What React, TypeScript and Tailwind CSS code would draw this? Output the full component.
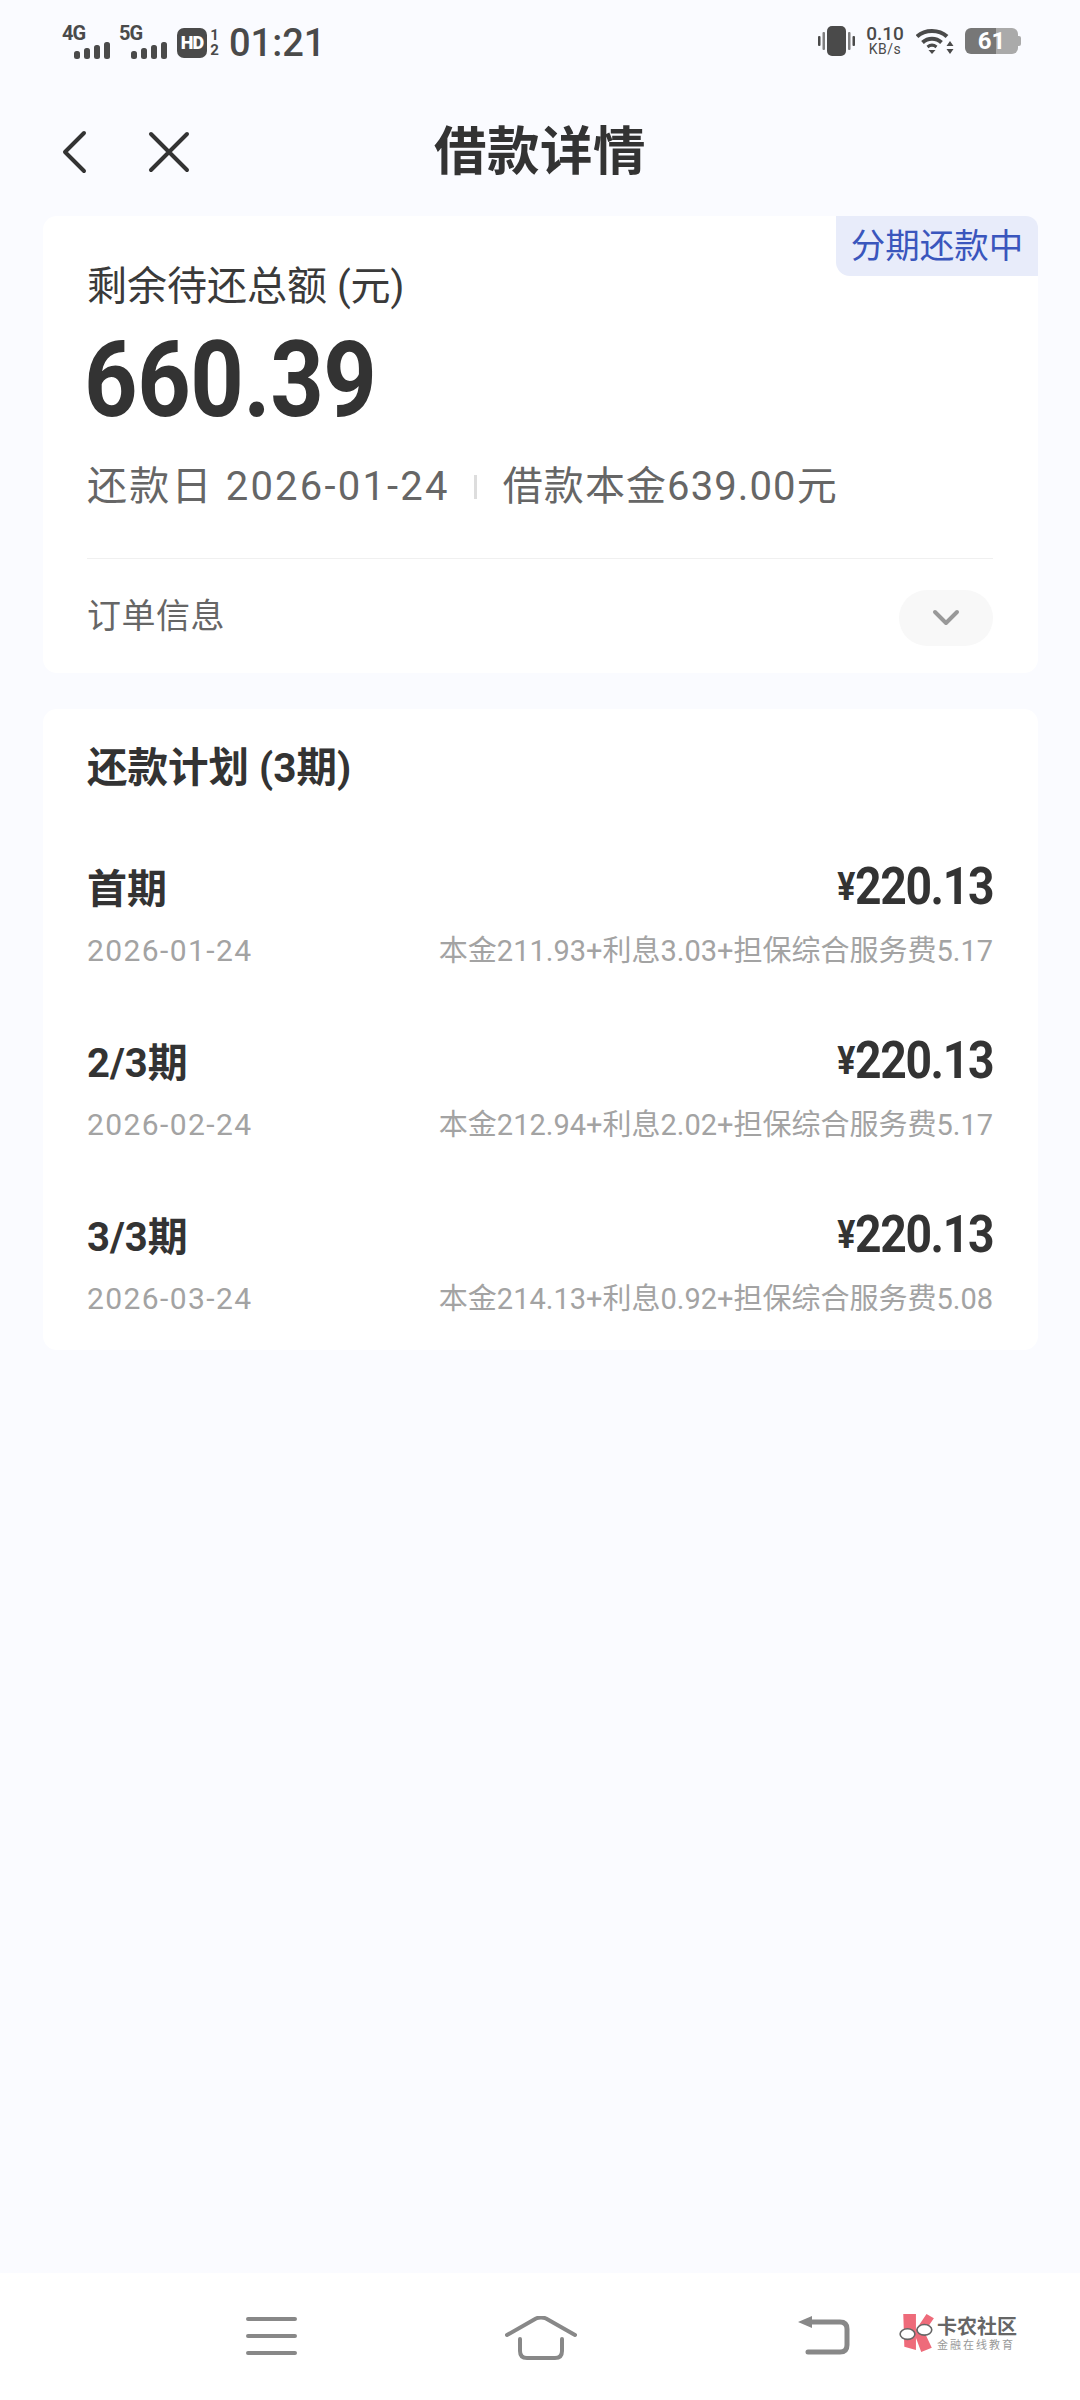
const font = "font-['Roboto','Noto_Sans_CJK_SC',sans-serif]";

const plans = [
  { name: "首期", date: "2026-01-24", detail: "本金211.93+利息3.03+担保综合服务费5.17" },
  { name: "2/3期", date: "2026-02-24", detail: "本金212.94+利息2.02+担保综合服务费5.17" },
  { name: "3/3期", date: "2026-03-24", detail: "本金214.13+利息0.92+担保综合服务费5.08" },
];

function Bars() {
  return (
    <svg width="36" height="17" viewBox="0 0 36 17" fill="#4a4a4a">
      <rect x="0" y="9" width="6" height="8" rx="2.5" />
      <rect x="10" y="6" width="6" height="11" rx="2.5" />
      <rect x="20" y="3" width="6" height="14" rx="2.5" />
      <rect x="30" y="0" width="6" height="17" rx="2.5" />
    </svg>
  );
}

function Net({ label }: { label: string }) {
  return (
    <div className="flex w-[48px] flex-col">
      <span className="h-[15px] text-[20px] leading-[15px] font-bold tracking-[-1px] text-[#4a4a4a]">{label}</span>
      <div className="mt-[1px] flex justify-end"><Bars /></div>
    </div>
  );
}

function StatusBar() {
  return (
    <div className="flex h-[86px] items-start justify-between pt-[26px] pr-[59px] pl-[62px]">
      <div className="flex items-center">
        <Net label="4G" />
        <div className="ml-[9px]"><Net label="5G" /></div>
        <div className="ml-[10px] flex h-[30px] w-[30px] items-center justify-center rounded-[7px] bg-[#4a4a4a] text-[18px] leading-none font-black tracking-[-1px] text-white">HD</div>
        <div className="ml-[2px] flex w-[11px] flex-col items-center text-[15px] leading-[15px] font-bold text-[#4a4a4a]">
          <span>1</span>
          <span>2</span>
        </div>
        <span className="ml-[9px] text-[38px] leading-[32px] font-medium text-[#4a4a4a]">01:21</span>
      </div>
      <div className="flex items-center">
        <svg width="37" height="30" viewBox="0 0 37 30" fill="#4a4a4a">
          <rect x="9" y="0" width="19" height="30" rx="5" />
          <rect x="0" y="10" width="2.5" height="10" rx="1" />
          <rect x="4.5" y="6" width="2.5" height="18" rx="1" opacity=".7" />
          <rect x="30" y="6" width="2.5" height="18" rx="1" opacity=".7" />
          <rect x="34.5" y="10" width="2.5" height="10" rx="1" />
        </svg>
        <div className="ml-[11px] flex w-[38px] flex-col items-center text-[#4a4a4a]">
          <span className="text-[19px] leading-[16px] font-medium">0.10</span>
          <span className="text-[14px] leading-[14px] tracking-[.5px]">KB/s</span>
        </div>
        <svg className="ml-[12px]" width="38" height="28" viewBox="0 0 38 28" fill="none" stroke="#4a4a4a" strokeWidth="4">
          <path d="M1 9.5C9 2 23 2 31 9.5" />
          <path d="M6.5 15.5C12 10.5 20 10.5 25.5 15.5" />
          <path d="M11.5 20C14.5 17.5 17.500 17.500 20.500 20" strokeWidth="3" />
          <path d="M12.500 23H19.500L16 27Z" fill="#4a4a4a" stroke="none" />
          <path d="M34 14L37.500 19H30.500ZM34 27L37.500 22H30.500Z" fill="#4a4a4a" stroke="none" />
        </svg>
        <div className="ml-[11px] flex items-center">
          <div className="flex h-[26px] w-[53px] items-center justify-center rounded-[6px] bg-[linear-gradient(90deg,#777_0,#777_58%,#aaa_58%,#aaa_100%)] text-[24px] font-bold text-white">61</div>
          <div className="h-[10px] w-[3px] rounded-r-[2px] bg-[#aaa]" />
        </div>
      </div>
    </div>
  );
}

function Header() {
  return (
    <div className="relative flex h-[130px] items-center justify-center pt-[2px]">
      <div className="absolute top-[44px] left-[60px] flex items-center">
        <svg width="30" height="44" viewBox="0 0 30 44" fill="none" stroke="#333" strokeWidth="4" strokeLinecap="round" strokeLinejoin="round">
          <path d="M24 3L5 22L24 41" />
        </svg>
        <svg className="ml-[58px]" width="42" height="42" viewBox="0 0 42 42" fill="none" stroke="#333" strokeWidth="4" strokeLinecap="round">
          <path d="M3 3L39 39M39 3L3 39" />
        </svg>
      </div>
      <h1 className="text-[52.500px] leading-none font-bold tracking-[.5px] text-[#333]">借款详情</h1>
    </div>
  );
}

function SummaryCard() {
  return (
    <section className="relative mr-[42px] ml-[43px] h-[457px] rounded-[14px] bg-white pt-[46px] pr-[45px] pl-[44px]">
      <div className="absolute top-0 right-0 flex h-[60px] w-[202px] items-center justify-center rounded-tr-[12px] rounded-bl-[14px] bg-[#e8ecfa] text-[34.500px] leading-none text-[#3a56bd]">分期还款中</div>
      <div className="mt-[1px] text-[40px] leading-[48px] text-[#3a3a3a]">剩余待还总额 (元)</div>
      <div className="mt-[15px] -ml-[3px] h-[110px] origin-left scale-x-[.89] text-[105px] leading-[110px] font-bold tracking-[-.5px] text-[#333]">660.39</div>
      <div className="mt-[25px] flex h-[52px] items-center text-[40px] leading-none text-[#666]">
        <span className="tracking-[2.200px]">还款日 2026-01-24</span>
        <span className="mr-[26px] ml-[24px] h-[24px] w-[3px] bg-[#ddd]" />
        <span className="tracking-[1.100px]">借款本金639.00元</span>
      </div>
      <div className="mt-[45px] flex h-[115px] items-center justify-between border-t border-[#f0f0f0]">
        <span className="text-[34px] leading-none tracking-[.5px] text-[#666]">订单信息</span>
        <span className="mt-[4px] flex h-[56px] w-[94px] items-center justify-center rounded-full bg-[#f8f8f8]">
          <svg width="28" height="18" viewBox="0 0 28 18" fill="none" stroke="#999" strokeWidth="4" strokeLinecap="round" strokeLinejoin="round">
            <path d="M3 3L14 14L25 3" />
          </svg>
        </span>
      </div>
    </section>
  );
}

function PlanCard() {
  return (
    <section className="mt-[36px] mr-[42px] ml-[43px] h-[641px] rounded-[14px] bg-white pt-[33px] pr-[45px] pl-[44px]">
      <h2 className="text-[40.500px] leading-[52px] font-bold text-[#333]">还款计划 (3期)</h2>
      <div className="mt-[66px] flex flex-col gap-[56px]">
        {plans.map((p) => (
          <div key={p.name} className="flex h-[118px] justify-between">
            <div className="flex flex-col">
              <span className="text-[40px] leading-[60px] font-bold text-[#333]">{p.name}</span>
              <span className="mt-[14px] text-[30px] leading-[34px] tracking-[1.400px] text-[#a3a3a3]">{p.date}</span>
            </div>
            <div className="flex flex-col items-end">
              <span className="-mt-[3px] flex h-[60px] origin-right scale-x-[.89] items-center text-[52px] leading-none font-bold tracking-[-1.500px] text-[#333]">
                <span className="mr-[1px] text-[38px]">¥</span>220.13
              </span>
              <span className="mt-[17px] text-[29px] leading-[34px] text-[#a3a3a3]">{p.detail}</span>
            </div>
          </div>
        ))}
      </div>
    </section>
  );
}

function NavBar() {
  return (
    <nav className="flex h-[127px] items-start bg-white pt-[43px]">
      <svg className="ml-[245px]" width="54" height="42" viewBox="0 0 54 42" fill="none" stroke="#888" strokeWidth="4" strokeLinecap="round">
        <path d="M3 3H50M3 20H50M3 37H50" />
      </svg>
      <svg className="ml-[206px]" width="72" height="46" viewBox="0 0 72 46" fill="none" stroke="#888" strokeWidth="4" strokeLinecap="round" strokeLinejoin="round">
        <path d="M2 19L31 2.500Q36 0.500 41 2.500L70 19" />
        <path d="M15 23V35Q15 42 22 42H50Q57 42 57 35V23" />
      </svg>
      <svg className="ml-[219px]" width="54" height="42" viewBox="0 0 54 42" fill="none">
        <path d="M2 6L16 0V12Z" fill="#888" />
        <path d="M12 6H44Q51 6 51 13V29Q51 36 44 36H12" stroke="#888" strokeWidth="5" strokeLinecap="round" />
      </svg>
      <div className="ml-[48px] flex items-center">
        <svg width="38" height="38" viewBox="0 0 36 36" className="-mt-[4px]">
          <path d="M5 0L17 0L17 34L6 31Z" fill="#ee6b7a" />
          <path d="M17 15L27 0L34 4L25 17L32 32L22 36L16 20Z" fill="#ee6b7a" />
          <ellipse cx="9" cy="19" rx="7" ry="5" fill="#fff" stroke="#666" strokeWidth="1.500" />
          <ellipse cx="25" cy="15" rx="7" ry="5" fill="#fff" stroke="#666" strokeWidth="1.500" />
        </svg>
        <div className="ml-[1px] flex flex-col">
          <span className="text-[20px] leading-[22px] font-bold text-[#666]">卡农社区</span>
          <span className="text-[11px] leading-[15px] tracking-[2px] text-[#999]">金融在线教育</span>
        </div>
      </div>
    </nav>
  );
}

export default function App() {
  return (
    <div className={`flex h-[2400px] w-[1080px] flex-col overflow-hidden bg-[#fafbff] ${font}`}>
      <StatusBar />
      <Header />
      <SummaryCard />
      <PlanCard />
      <div className="flex-1" />
      <NavBar />
    </div>
  );
}
